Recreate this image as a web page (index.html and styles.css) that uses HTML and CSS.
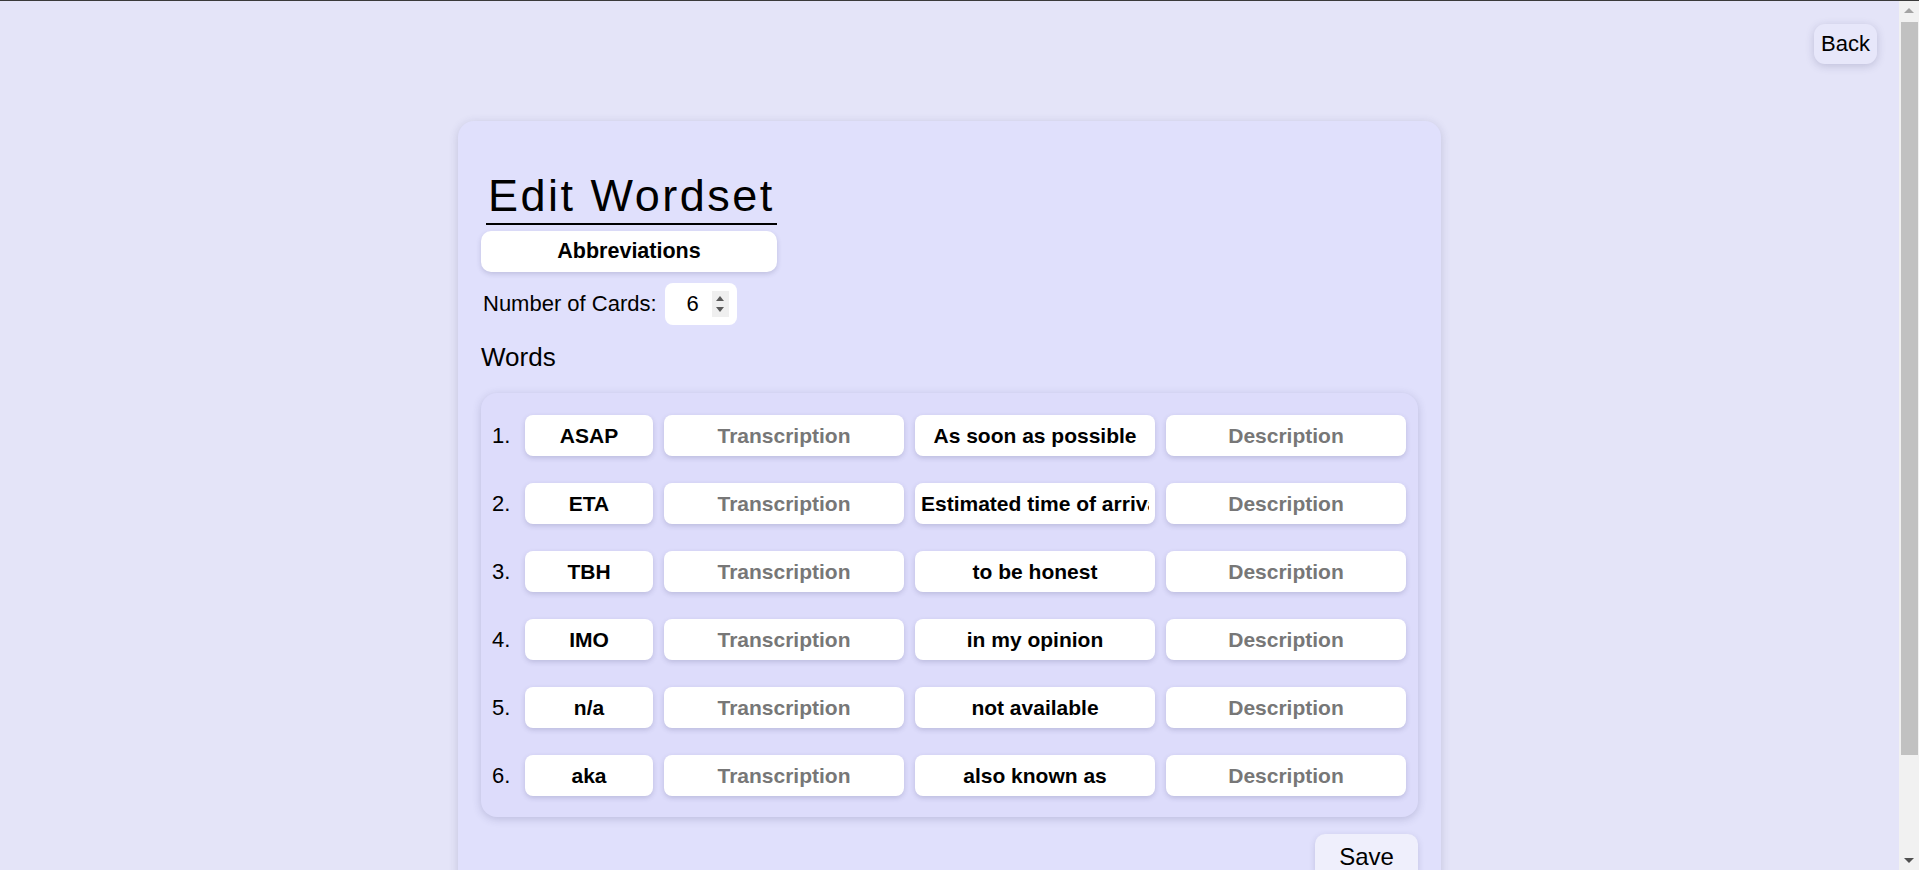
FILE: index.html
```html
<!DOCTYPE html>
<html lang="en">
<head>
<meta charset="utf-8">
<title>Edit Wordset</title>
<link rel="stylesheet" href="styles.css">
</head>
<body>
<div class="scrollbar" aria-hidden="true">
  <span class="sb-btn"><span class="sb-up"></span></span>
  <span class="sb-thumb"></span>
  <span class="sb-track"></span>
  <span class="sb-btn"><span class="sb-down"></span></span>
</div>
<div class="topbar">
  <button class="back-btn" type="button">Back</button>
</div>
<main class="card">
  <h1 class="title">Edit Wordset</h1>
  <input class="name-input" type="text" value="Abbreviations">
  <div class="count-row">
    <label class="count-label" for="count">Number of Cards:</label>
    <div class="number-box">
      <input id="count" class="number-input" type="text" value="6">
      <span class="spin"><span class="spin-up"></span><span class="spin-down"></span></span>
    </div>
  </div>
  <h2 class="words-title">Words</h2>
  <section class="words-panel">
    <div class="word-row">
      <span class="num">1.</span>
      <input class="field field-word" type="text" value="ASAP">
      <input class="field" type="text" placeholder="Transcription">
      <input class="field" type="text" value="As soon as possible">
      <input class="field" type="text" placeholder="Description">
    </div>
    <div class="word-row">
      <span class="num">2.</span>
      <input class="field field-word" type="text" value="ETA">
      <input class="field" type="text" placeholder="Transcription">
      <input class="field field-long" type="text" value="Estimated time of arrival">
      <input class="field" type="text" placeholder="Description">
    </div>
    <div class="word-row">
      <span class="num">3.</span>
      <input class="field field-word" type="text" value="TBH">
      <input class="field" type="text" placeholder="Transcription">
      <input class="field" type="text" value="to be honest">
      <input class="field" type="text" placeholder="Description">
    </div>
    <div class="word-row">
      <span class="num">4.</span>
      <input class="field field-word" type="text" value="IMO">
      <input class="field" type="text" placeholder="Transcription">
      <input class="field" type="text" value="in my opinion">
      <input class="field" type="text" placeholder="Description">
    </div>
    <div class="word-row">
      <span class="num">5.</span>
      <input class="field field-word" type="text" value="n/a">
      <input class="field" type="text" placeholder="Transcription">
      <input class="field" type="text" value="not available">
      <input class="field" type="text" placeholder="Description">
    </div>
    <div class="word-row">
      <span class="num">6.</span>
      <input class="field field-word" type="text" value="aka">
      <input class="field" type="text" placeholder="Transcription">
      <input class="field" type="text" value="also known as">
      <input class="field" type="text" placeholder="Description">
    </div>
  </section>
  <div class="actions">
    <button class="save-btn" type="button">Save</button>
  </div>
</main>
</body>
</html>
```
FILE: styles.css
```css
html {
  background: #e4e4f8;
}

body {
  margin: 0;
  border-top: 1px solid #3a3a3a;
  padding: 0 20px 70px 0;
  font-family: "Trebuchet MS", "Liberation Sans", Arial, sans-serif;
  color: #000;
}

/* browser scrollbar, drawn over the right edge of the viewport */
.scrollbar {
  position: fixed;
  top: 1px;
  right: 0;
  bottom: 0;
  width: 20px;
  background: #f1f1f1;
  display: flex;
  flex-direction: column;
  align-items: center;
}

.sb-btn {
  height: 21px;
  width: 100%;
  display: flex;
  align-items: center;
  justify-content: center;
}

.sb-thumb {
  width: 17px;
  height: 733px;
  margin-left: 1px;
  background: #c1c1c1;
}

.sb-track {
  flex: 1;
}

.sb-up,
.sb-down {
  width: 0;
  height: 0;
  border-left: 5px solid transparent;
  border-right: 5px solid transparent;
}

.sb-up {
  border-bottom: 5px solid #a3a3a3;
  margin-top: -2px;
}

.sb-down {
  border-top: 5px solid #505050;
  margin-top: 2px;
}

.topbar {
  display: flex;
  justify-content: flex-end;
  padding: 23px 22px 0 0;
}

.back-btn {
  height: 40px;
  width: 63px;
  padding: 0;
  border: none;
  border-radius: 11px;
  background: #e7e7fa;
  box-shadow: 0 2px 8px rgba(60, 60, 110, 0.22);
  font-family: inherit;
  font-size: 22px;
  color: #000;
}

.card {
  box-sizing: border-box;
  width: 983px;
  margin: 57px auto 0;
  padding: 48px 23px 40px;
  background: #e0e0fc;
  border-radius: 16px;
  box-shadow: 0 2px 10px rgba(60, 60, 110, 0.2);
  display: flex;
  flex-direction: column;
  align-items: flex-start;
}

.title {
  margin: 0 0 0 5px;
  padding: 0 2px;
  font-size: 45px;
  font-weight: normal;
  line-height: 54px;
  letter-spacing: 2.5px;
  border-bottom: 2px solid #000;
}

.name-input {
  box-sizing: border-box;
  margin-top: 6px;
  width: 296px;
  height: 41px;
  border: none;
  border-radius: 10px;
  background: #fff;
  box-shadow: 0 2px 5px rgba(60, 60, 110, 0.2);
  font-family: inherit;
  font-size: 21.5px;
  font-weight: bold;
  text-align: center;
  color: #000;
  outline: none;
}

.count-row {
  margin-top: 11px;
  display: flex;
  align-items: center;
  gap: 8px;
  padding-left: 2px;
}

.count-label {
  font-size: 22px;
  line-height: 26px;
}

.number-box {
  box-sizing: border-box;
  width: 72px;
  height: 42px;
  border-radius: 8px;
  background: #fff;
  display: flex;
  align-items: center;
  padding: 0 8px 0 0;
}

.number-input {
  box-sizing: border-box;
  width: 47px;
  padding: 0 13px 0 0;
  border: none;
  background: transparent;
  font-family: inherit;
  font-size: 22px;
  text-align: right;
  color: #000;
  outline: none;
}

.spin {
  width: 17px;
  height: 26px;
  background: #efefef;
  display: flex;
  flex-direction: column;
  align-items: center;
  justify-content: center;
  gap: 6px;
}

.spin-up,
.spin-down {
  width: 0;
  height: 0;
  border-left: 4px solid transparent;
  border-right: 4px solid transparent;
}

.spin-up {
  border-bottom: 5px solid #5a5a5a;
}

.spin-down {
  border-top: 5px solid #5a5a5a;
}

.words-title {
  margin: 17px 0 0;
  font-size: 26px;
  font-weight: normal;
  line-height: 30px;
}

.words-panel {
  box-sizing: border-box;
  align-self: stretch;
  margin-top: 21px;
  padding: 22px 11px 21px;
  background: #dddcfb;
  border-radius: 16px;
  box-shadow: 0 2px 8px rgba(60, 60, 110, 0.22);
  display: flex;
  flex-direction: column;
  gap: 27px;
}

.word-row {
  display: flex;
  align-items: center;
  gap: 11px;
}

.num {
  width: 22px;
  font-size: 22px;
}

.field {
  box-sizing: border-box;
  width: 240px;
  height: 41px;
  padding: 0 6px;
  border: none;
  border-radius: 8px;
  background: #fff;
  box-shadow: 0 2px 5px rgba(60, 60, 110, 0.2);
  font-family: inherit;
  font-size: 21px;
  font-weight: bold;
  text-align: center;
  color: #000;
  outline: none;
}

.field::placeholder {
  color: #777;
  opacity: 1;
}

.field-word {
  width: 128px;
}

.field-long {
  text-align: left;
}

.actions {
  align-self: stretch;
  display: flex;
  justify-content: flex-end;
  margin-top: 17px;
}

.save-btn {
  width: 103px;
  height: 46px;
  padding: 0;
  border: none;
  border-radius: 10px;
  background: #efeffc;
  box-shadow: 0 2px 6px rgba(60, 60, 110, 0.18);
  font-family: inherit;
  font-size: 24px;
  color: #000;
}
```
